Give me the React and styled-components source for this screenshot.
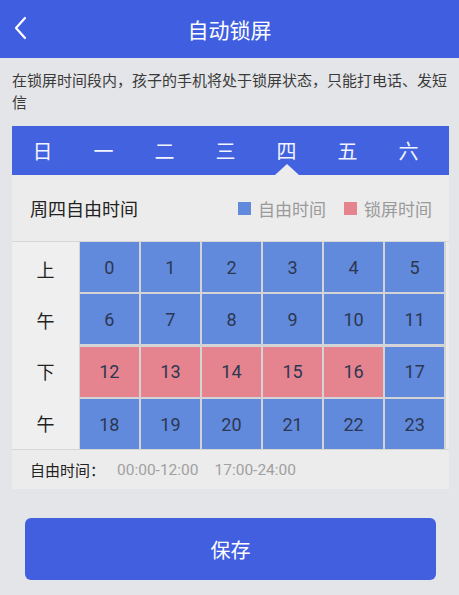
import styled, { createGlobalStyle } from 'styled-components';

const GlobalStyle = createGlobalStyle`
    html, body {
        margin: 0;
        padding: 0;
        background: #e4e5e8;
        font-family: Roboto, "Noto Sans CJK SC", sans-serif;
    }
    * {
        box-sizing: border-box;
    }
`;

const Page = styled.div`
    width: 459px;
    min-height: 595px;
    background: #e4e5e8;
`;

const Header = styled.header`
    height: 58px;
    background: #3f5fe0;
    display: flex;
    align-items: center;
    justify-content: center;
    position: relative;
    color: #fff;
    font-size: 21px;
`;

const BackButton = styled.button`
    position: absolute;
    left: 8px;
    top: 15px;
    width: 24px;
    height: 26px;
    padding: 0;
    border: none;
    background: none;
    display: flex;
    align-items: center;
    justify-content: center;
`;

const Notice = styled.p`
    margin: 0;
    padding: 12px 12px 0 12px;
    font-size: 15px;
    line-height: 22px;
    color: #3a3a3a;
`;

const Card = styled.section`
    margin: 12px 10px 0 12px;
    background: #ececec;
`;

const DayBar = styled.div`
    height: 49px;
    background: #4262e0;
    display: flex;
`;

const DayTab = styled.div`
    width: 61px;
    position: relative;
    display: flex;
    align-items: center;
    justify-content: center;
    color: #f2f4ff;
    font-size: 20px;

    &::after {
        content: '';
        display: ${(p) => (p.$active ? 'block' : 'none')};
        position: absolute;
        bottom: 0;
        left: 50%;
        margin-left: -12px;
        border-left: 12px solid transparent;
        border-right: 12px solid transparent;
        border-bottom: 11px solid #ececec;
    }
`;

const TitleRow = styled.div`
    height: 66px;
    display: flex;
    align-items: center;
    justify-content: space-between;
    padding: 0 17px 0 18px;
`;

const Title = styled.h2`
    margin: 0;
    font-size: 18px;
    font-weight: normal;
    color: #222;
`;

const Legend = styled.div`
    display: flex;
    align-items: center;
    gap: 18px;
`;

const LegendItem = styled.span`
    display: flex;
    align-items: center;
    gap: 7px;
    font-size: 17px;
    color: #9a9a9a;

    &::before {
        content: '';
        width: 13px;
        height: 13px;
        background: ${(p) => p.$color};
    }
`;

const HourSection = styled.div`
    display: flex;
    border-top: 1px solid #d6d6d6;
    border-bottom: 1px solid #d6d6d6;
`;

const HalfLabels = styled.div`
    width: 67px;
    background: #efefef;
    display: grid;
    grid-template-rows: repeat(4, 1fr);
    padding: 1px 0;
`;

const HalfLabel = styled.div`
    display: flex;
    align-items: center;
    justify-content: center;
    font-size: 18px;
    color: #222;
`;

const HourGrid = styled.div`
    flex: 1;
    margin-right: 3px;
    background: #d4d4d6;
    display: grid;
    grid-template-columns: repeat(6, 1fr);
    grid-auto-rows: 50px;
    gap: 2.4px;
    padding: 0 2px 0 1px;
`;

const HourCell = styled.div`
    background: ${(p) => (p.$locked ? '#e5838e' : '#6189dc')};
    display: flex;
    align-items: center;
    justify-content: center;
    font-size: 18px;
    color: #2c3752;
`;

const Summary = styled.div`
    height: 39px;
    display: flex;
    align-items: center;
    padding-left: 18px;
    font-size: 15px;
    color: #222;
`;

const Range = styled.span`
    color: #a0a0a0;
    font-size: 15.5px;
    margin-left: ${(p) => p.$gap}px;
`;

const SaveButton = styled.button`
    display: block;
    margin: 29px auto 0 25px;
    width: 411px;
    height: 62px;
    border: none;
    border-radius: 6px;
    background: #425fe0;
    color: #fff;
    font-family: inherit;
    font-size: 20px;
`;

const days = ['日', '一', '二', '三', '四', '五', '六'];
const halves = ['上', '午', '下', '午'];
const lockedHours = [12, 13, 14, 15, 16];

function App() {
    return (
        <Page>
            <GlobalStyle />
            <Header>
                <BackButton aria-label="返回">
                    <svg width="14" height="24" viewBox="0 0 14 24">
                        <path d="M12 2 L3 12 L12 22" fill="none" stroke="#fff" strokeWidth="2.2" strokeLinecap="round" strokeLinejoin="round" />
                    </svg>
                </BackButton>
                自动锁屏
            </Header>
            <Notice>在锁屏时间段内，孩子的手机将处于锁屏状态，只能打电话、发短信</Notice>
            <Card>
                <DayBar>
                    {days.map((d, i) => (
                        <DayTab key={d} $active={i === 4}>{d}</DayTab>
                    ))}
                </DayBar>
                <TitleRow>
                    <Title>周四自由时间</Title>
                    <Legend>
                        <LegendItem $color="#6189dc">自由时间</LegendItem>
                        <LegendItem $color="#e5838e">锁屏时间</LegendItem>
                    </Legend>
                </TitleRow>
                <HourSection>
                    <HalfLabels>
                        {halves.map((h, i) => (
                            <HalfLabel key={i}>{h}</HalfLabel>
                        ))}
                    </HalfLabels>
                    <HourGrid>
                        {Array.from({ length: 24 }, (_, h) => (
                            <HourCell key={h} $locked={lockedHours.includes(h)}>{h}</HourCell>
                        ))}
                    </HourGrid>
                </HourSection>
                <Summary>
                    自由时间：
                    <Range $gap={12}>00:00-12:00</Range>
                    <Range $gap={16}>17:00-24:00</Range>
                </Summary>
            </Card>
            <SaveButton>保存</SaveButton>
        </Page>
    );
}

export default App;
